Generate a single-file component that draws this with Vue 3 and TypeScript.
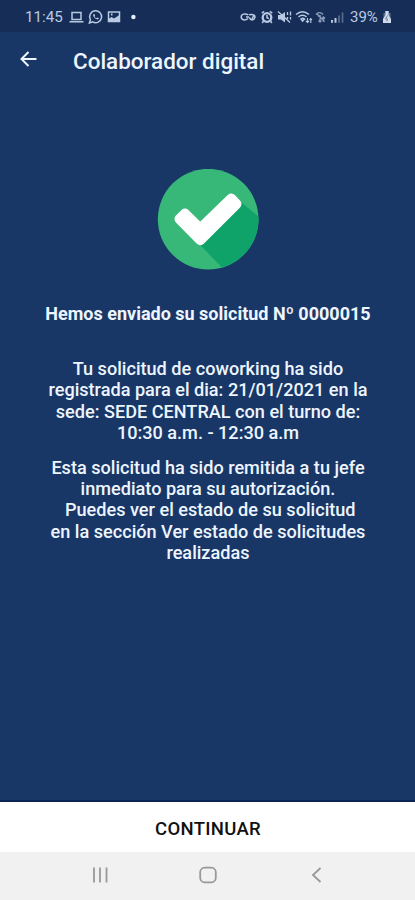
<script setup lang="ts">
const requestLines: string[] = [
  'Tu solicitud de coworking ha sido',
  'registrada para el dia: 21/01/2021 en la',
  'sede: SEDE CENTRAL con el turno de:',
  '10:30 a.m. - 12:30 a.m',
]
const approvalLines: string[] = [
  'Esta solicitud ha sido remitida a tu jefe',
  'inmediato para su autorización.',
  '\u00a0Puedes ver el estado de su solicitud',
  'en la sección Ver estado de solicitudes',
  'realizadas',
]
</script>

<template>
  <div class="screen">
    <header class="status">
      <span class="clock">11:45</span>
      <svg class="notifications" width="70" height="16" viewBox="0 0 70 16" fill="none" stroke="currentColor" stroke-width="1.5">
        <path d="M3 3.500h9v7H3zM.5 12.700h14" />
        <path d="M20.400 14l1-3.400a6 6 0 1 1 2.300 2.300z" />
        <path d="M24.300 5.200c-.8 1.300.6 3.800 3.600 5.100 1.300.4 2-.6 1.900-1.100l-1.700-.8-.8.8c-.8-.3-1.500-1-1.800-1.800l.6-.7-.7-1.700z" fill="currentColor" stroke="none" />
        <path d="M39.500 3h11v9.500h-11z" />
        <path d="M39.500 12.500V10l3-2 2.500 1.500 5.500-3.500v6.500zM42 4.500h1.500v2H42z" fill="currentColor" stroke="none" />
        <circle cx="64.400" cy="8" r="2.200" fill="#e5efff" stroke="none" />
      </svg>
      <svg class="indicators" width="104" height="16" viewBox="0 0 104 16" fill="none" stroke="currentColor" stroke-width="1.5">
        <path d="M8.200 5.800C5 4 1.200 5 1.200 8S5 12 8 9.500M6 8h3M9 5.800c3-1 6 0 6 2s-2 3-3 3-2.500-1-2.500-2.500M14 6l-2 4" />
        <circle cx="27" cy="8.500" r="4.300" stroke-width="2.300" />
        <path d="M21.700 4.200l2.500-1.800M32.300 4.200l-2.500-1.800M27 6v2.700l2 1M23.500 12l-1.300 2M30.500 12l1.300 2" />
        <path d="M38 6h3l4-3v10.500l-4-3h-3z" fill="currentColor" stroke="none" />
        <path d="M38 2.500l12 11M47.500 3v3M50.500 2.500v4M47.500 8v2M50.500 8v2.500" stroke-width="1.300" />
        <path d="M56 5.500c4-3.500 9-3.500 13 0M58.500 7.800c2.500-2 5.500-2 8 0M61 10c1-.8 2.500-.8 3.500 0l-2 2z" />
        <path d="M67.500 9v4.500M66 12l1.500 1.500L69 12M70.800 14V9.500M69.500 11l1.300-1.500 1.200 1.500" stroke-width="1.100" />
        <g opacity=".7"><path d="M76 5.500c2-2.500 5-2.500 7 0M76.500 4.500l8 8M78 7.500c1-1 2-1 3 0M80 13V9M78.500 11.500L80 13l1.500-1.500M83.500 13V8M82 9.500L83.500 8 85 9.500" stroke-width="1.300" /></g>
        <path d="M92 11v2.800M95.500 9v4.800" stroke-width="2" />
        <path d="M99 6.500v7.300M102.500 3.500v10.300" stroke-width="1.700" opacity=".4" />
      </svg>
      <span class="percent">39%</span>
      <svg class="battery" width="10" height="14" viewBox="0 0 10 14">
        <path d="M3 1h4v2h1.500v10h-7V3H3z" fill="currentColor" opacity=".45" />
        <path d="M3.500 1h3v4L9 9v4H1V9l2.500-4z" fill="#d0dcec" />
        <path d="M5.500 5.500L3.500 9h2l-.7 2.500" fill="none" stroke="#71849f" />
      </svg>
    </header>

    <nav class="toolbar">
      <svg class="back" width="18" height="18" viewBox="0 0 18 18" fill="none" stroke="#eef5ff" stroke-width="2">
        <path d="M16.500 9H2M8.500 2L1.500 9l7 7" />
      </svg>
      <h1>Colaborador digital</h1>
    </nav>

    <main>
      <svg class="success" width="102" height="102" viewBox="28 26 306 306">
        <defs>
          <clipPath id="disc"><circle cx="181.500" cy="176.500" r="151" /></clipPath>
        </defs>
        <circle cx="181.500" cy="176.500" r="151" fill="#37b879" />
        <path d="M279 124l120 100v160H282L152 248z" fill="#10a369" clip-path="url(#disc)" />
        <path d="M112 159l46 45 93-90 16 17-109 109-63-64z" fill="#fff" stroke="#fff" stroke-width="29" stroke-linejoin="round" />
      </svg>
      <h2><span>Hemos enviado su solicitud Nº 0000015</span></h2>
      <p class="request"><span v-for="line in requestLines" :key="line">{{ line }}</span></p>
      <p class="approval"><span v-for="line in approvalLines" :key="line">{{ line }}</span></p>
    </main>

    <button class="continue" type="button">CONTINUAR</button>
    <footer class="navigation">
      <svg width="18" height="18" viewBox="0 0 18 18"><path d="M3 1.500v15M9 1.500v15M15.500 1.500v15" /></svg>
      <svg width="18" height="18" viewBox="0 0 18 18"><rect x="1.200" y="1.700" width="15.600" height="14.600" rx="4.500" /></svg>
      <svg width="18" height="18" viewBox="0 0 18 18"><path d="M13.500 2L6 9l7.500 7" /></svg>
    </footer>
  </div>
</template>

<style>
body {
  background: #193766;
}
</style>

<style scoped>
.screen {
  display: flex;
  flex-direction: column;
  height: 900px;
  overflow: hidden;
  background: #193766;
  color: #edf5ff;
  font-family: Roboto, sans-serif;
}
.status {
  display: flex;
  align-items: center;
  box-sizing: border-box;
  height: 32px;
  padding: 1px 23px 0 25px;
  background: #162e57;
  color: #b9c9e2;
}
.clock {
  width: 44px;
  font-size: 15.200px;
  white-space: nowrap;
}
.indicators {
  margin-left: auto;
}
.percent {
  width: 28px;
  margin-left: 6px;
  font-size: 15px;
}
.battery {
  margin-left: 4px;
}
.toolbar {
  display: flex;
  align-items: center;
  height: 58px;
  padding-left: 20px;
}
.back {
  margin-top: -4px;
}
h1 {
  margin: -1px 0 0 35px;
  font-size: 22.450px;
  font-weight: 500;
  line-height: 26px;
  white-space: nowrap;
}
main {
  display: flex;
  flex: 1;
  flex-direction: column;
  align-items: center;
  padding-left: 1px;
  border-bottom: 2px solid #0b2454;
}
.success {
  flex: none;
  margin-top: 79px;
}
h2 {
  margin: 32px 0 0;
  font-size: 18px;
  font-weight: 700;
  line-height: 21px;
  white-space: nowrap;
}
p {
  display: flex;
  flex-direction: column;
  align-items: center;
  margin: 0;
  font-size: 18.120px;
  font-weight: 500;
  line-height: 21.400px;
  white-space: nowrap;
}
.request {
  margin-top: 34px;
}
.approval {
  margin-top: 13px;
}
.continue {
  height: 50px;
  padding: 3px 0 0 1px;
  border: 0;
  background: #fff;
  color: #111;
  font: 500 18.500px/24px Roboto, sans-serif;
  letter-spacing: .3px;
}
.navigation {
  display: flex;
  justify-content: center;
  gap: 90px;
  box-sizing: border-box;
  height: 48px;
  padding-top: 14px;
  background: #f1f1f1;
}
.navigation svg {
  fill: none;
  stroke: #999;
  stroke-width: 1.800;
}
</style>
